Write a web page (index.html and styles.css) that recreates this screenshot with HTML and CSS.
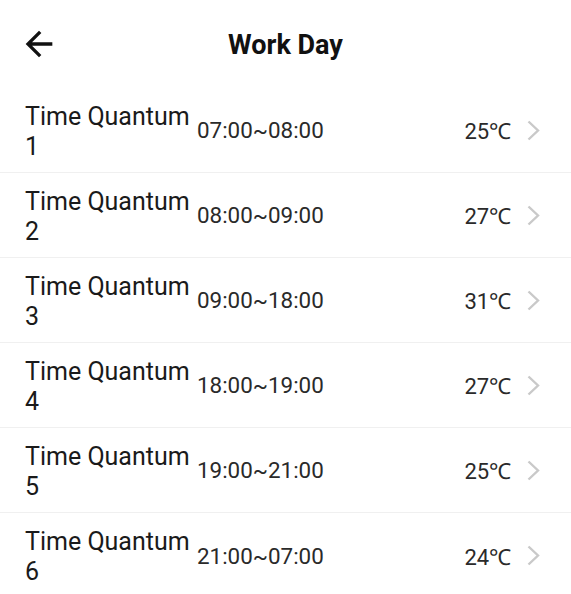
FILE: index.html
```html
<!DOCTYPE html>
<html lang="en">
<head>
  <meta charset="UTF-8" />
  <meta name="viewport" content="width=device-width, initial-scale=1.0"/>
  <title>Work Day</title>
  <link rel="stylesheet" href="styles.css">
</head>
<body>

<header class="topbar">
  <a class="back">
    <svg viewBox="0 0 24 24" width="40" height="40"><path d="M20 11H7.83l5.59-5.59L12 4l-8 8 8 8 1.41-1.41L7.83 13H20v-2z" fill="#111"/></svg>
  </a>
  <h1>Work Day</h1>
</header>

<ul class="periods">
  <li class="period">
    <span class="label">Time Quantum 1</span>
    <span class="time">07:00~08:00</span>
    <span class="temp">25℃</span>
    <svg class="chev" viewBox="0 0 13 21" width="13" height="21"><path d="M1.5 1.5l9.5 9-9.5 9" fill="none" stroke="#c9c9c9" stroke-width="2.4"/></svg>
  </li>
  <li class="period">
    <span class="label">Time Quantum 2</span>
    <span class="time">08:00~09:00</span>
    <span class="temp">27℃</span>
    <svg class="chev" viewBox="0 0 13 21" width="13" height="21"><path d="M1.5 1.5l9.5 9-9.5 9" fill="none" stroke="#c9c9c9" stroke-width="2.4"/></svg>
  </li>
  <li class="period">
    <span class="label">Time Quantum 3</span>
    <span class="time">09:00~18:00</span>
    <span class="temp">31℃</span>
    <svg class="chev" viewBox="0 0 13 21" width="13" height="21"><path d="M1.5 1.5l9.5 9-9.5 9" fill="none" stroke="#c9c9c9" stroke-width="2.4"/></svg>
  </li>
  <li class="period">
    <span class="label">Time Quantum 4</span>
    <span class="time">18:00~19:00</span>
    <span class="temp">27℃</span>
    <svg class="chev" viewBox="0 0 13 21" width="13" height="21"><path d="M1.5 1.5l9.5 9-9.5 9" fill="none" stroke="#c9c9c9" stroke-width="2.4"/></svg>
  </li>
  <li class="period">
    <span class="label">Time Quantum 5</span>
    <span class="time">19:00~21:00</span>
    <span class="temp">25℃</span>
    <svg class="chev" viewBox="0 0 13 21" width="13" height="21"><path d="M1.5 1.5l9.5 9-9.5 9" fill="none" stroke="#c9c9c9" stroke-width="2.4"/></svg>
  </li>
  <li class="period">
    <span class="label">Time Quantum 6</span>
    <span class="time">21:00~07:00</span>
    <span class="temp">24℃</span>
    <svg class="chev" viewBox="0 0 13 21" width="13" height="21"><path d="M1.5 1.5l9.5 9-9.5 9" fill="none" stroke="#c9c9c9" stroke-width="2.4"/></svg>
  </li>
</ul>

</body>
</html>
```

FILE: styles.css
```css
* { margin: 0; padding: 0; box-sizing: border-box; }
body { font-family: Roboto, "Noto Sans", sans-serif; background: #fff; color: #1a1a1a; }

.topbar { position: relative; height: 88px; display: flex; align-items: center; justify-content: center; }
.back { position: absolute; left: 19px; top: 24px; display: block; width: 40px; height: 40px; }
.back svg { display: block; }
.topbar h1 { font-size: 27px; font-weight: bold; color: #111; margin-top: 2px; }

.periods { list-style: none; }
.period {
  height: 85px; display: flex; align-items: center;
  padding: 0 31px 0 25px; border-bottom: 1px solid #f0f0f0;
}
.period:last-child { border-bottom: none; }
.label { width: 172px; font-size: 25px; line-height: 30px; padding-top: 3px; }
.time { flex: 1; font-size: 22.4px; color: #2a2a2a; }
.temp { font-size: 22px; color: #2a2a2a; margin-right: 16px; }
.chev { display: block; }
```
